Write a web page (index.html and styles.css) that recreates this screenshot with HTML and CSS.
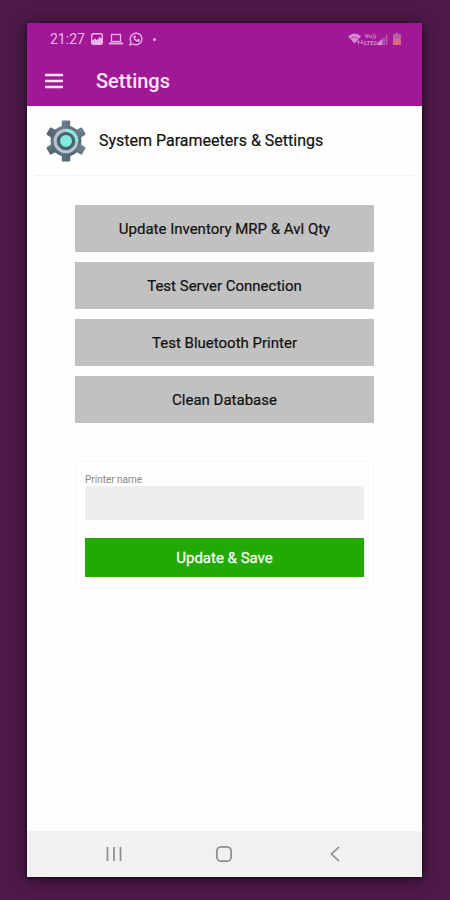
FILE: index.html
```html
<!DOCTYPE html>
<html lang="en">
<head>
    <meta charset="UTF-8">
    <meta name="viewport" content="width=device-width, initial-scale=1.0">
    <title>Settings</title>
    <link rel="stylesheet" href="styles.css">
</head>
<body>
    <div class="phone">
        <header class="top">
            <div class="status-bar">
                <span class="time">21:27</span>
                <svg width="12" height="12" viewBox="0 0 12 12">
                    <rect x="0.7" y="0.7" width="10.6" height="10.6" rx="1.5" fill="none" stroke="currentColor" stroke-width="1.4"/>
                    <path d="M1 8 L4 5.5 L6 7 L9 4 L11 6 V11 H1 Z" fill="currentColor"/>
                </svg>
                <svg width="14" height="12" viewBox="0 0 14 12">
                    <rect x="2.5" y="1.5" width="9" height="7" fill="none" stroke="currentColor" stroke-width="1.3"/>
                    <path d="M0 10.5 H14" stroke="currentColor" stroke-width="1.8"/>
                </svg>
                <svg width="14" height="14" viewBox="0 0 14 14" fill="none" stroke="currentColor">
                    <path d="M1 13 L2 9.7 A5.8 5.8 0 1 1 4.3 12 Z" stroke-width="1.3"/>
                    <path d="M5 4.3 C4.6 7 7 9.4 9.7 9.3 L9.9 8 L8.4 7.4 M5 4.3 L6 4.2 L6.5 5.6" stroke-width="1.4"/>
                </svg>
                <span class="dot"></span>
                <div class="signals">
                    <svg width="16" height="12" viewBox="0 0 16 12">
                        <path d="M0 3.5 Q6.5 -2.5 13 3.5 L6.5 10.5 Z" fill="currentColor"/>
                        <path d="M2.5 5.6 Q6.5 2.4 10.5 5.6" fill="none" stroke="#a01896" stroke-width="0.7"/>
                        <path d="M10.5 11 V8 M9.3 9.3 L10.5 7.8 L11.7 9.3 M14 7 V10.5 M12.8 9.2 L14 10.7 L15.2 9.2" fill="none" stroke="currentColor"/>
                    </svg>
                    <span class="lte">Vo))<br>LTE2</span>
                    <svg width="11" height="11" viewBox="0 0 11 11">
                        <path d="M0 11 V9.5 L5.5 4.5 V11 Z" fill="currentColor"/>
                        <path d="M7 11 V3.5 M9.5 11 V1" stroke="currentColor" stroke-width="1.5" opacity="0.6"/>
                    </svg>
                    <svg class="battery" width="8" height="12" viewBox="0 0 8 12">
                        <path d="M2.5 0 H5.5 V1.2 H8 V6 H0 V1.2 H2.5 Z" fill="#b560a8"/>
                        <rect y="5.5" width="8" height="6.5" rx="0.8" fill="#d96a83"/>
                    </svg>
                </div>
            </div>
            <div class="toolbar">
                <button class="menu-btn" type="button" aria-label="Menu">
                    <svg width="20" height="16" viewBox="0 0 20 16">
                        <path d="M1 2 H19 M1 8 H19 M1 14 H19" stroke="currentColor" stroke-width="2.4"/>
                    </svg>
                </button>
                <h1>Settings</h1>
            </div>
        </header>

        <main>
            <div class="section-title">
                <svg width="42" height="42" viewBox="0 0 42 42">
                    <defs>
                        <linearGradient id="steel" x1="0" y1="0" x2="1" y2="1">
                            <stop offset="0" stop-color="#71848e"/>
                            <stop offset="1" stop-color="#4f606b"/>
                        </linearGradient>
                    </defs>
                    <g fill="url(#steel)">
                        <circle cx="21" cy="21" r="15.5"/>
                        <path id="teeth" d="M15 8 L16.8 5.5 V1.5 Q16.8 0.5 17.8 0.5 H24.2 Q25.2 0.5 25.2 1.5 V5.5 L27 8 Z M15 34 L16.8 36.5 V40.5 Q16.8 41.5 17.8 41.5 H24.2 Q25.2 41.5 25.2 40.5 V36.5 L27 34 Z"/>
                        <use href="#teeth" transform="rotate(60 21 21)"/>
                        <use href="#teeth" transform="rotate(120 21 21)"/>
                    </g>
                    <circle cx="21" cy="21" r="10.8" fill="#536773" stroke="#b3c6d1" stroke-width="3"/>
                    <path d="M21 10.2 A10.8 10.8 0 0 1 31.8 21" fill="none" stroke="#8fe6e0" stroke-width="3"/>
                    <circle cx="21" cy="21" r="7" fill="#82ebe0" stroke="#43656d" stroke-width="2"/>
                </svg>
                <h2>System Parameeters &amp; Settings</h2>
            </div>

            <div class="actions">
                <button type="button">Update Inventory MRP &amp; Avl Qty</button>
                <button type="button">Test Server Connection</button>
                <button type="button">Test Bluetooth Printer</button>
                <button type="button">Clean Database</button>
            </div>

            <form class="printer-form">
                <label for="printerName">Printer name</label>
                <input type="text" id="printerName">
                <button type="button">Update &amp; Save</button>
            </form>
        </main>

        <nav class="nav-bar">
            <button type="button" aria-label="Recent apps">
                <svg width="16" height="16" viewBox="0 0 16 16">
                    <path d="M1.5 1 V15 M8 1 V15 M14.5 1 V15" stroke="currentColor" stroke-width="1.7"/>
                </svg>
            </button>
            <button type="button" aria-label="Home">
                <svg width="18" height="18" viewBox="0 0 18 18">
                    <rect x="1.8" y="1.8" width="14.4" height="14.4" rx="4.5" fill="none" stroke="currentColor" stroke-width="1.7"/>
                </svg>
            </button>
            <button type="button" aria-label="Back">
                <svg width="16" height="16" viewBox="0 0 16 16">
                    <path d="M12 1 L4.5 8 L12 15" fill="none" stroke="currentColor" stroke-width="1.7"/>
                </svg>
            </button>
        </nav>
    </div>
</body>
</html>
```

FILE: styles.css
```css
* { box-sizing: border-box; }
body {
    margin: 0;
    min-height: 100vh;
    display: flex;
    padding: 23px 28px 23px 27px;
    background: #4f1a4a;
    font-family: Roboto, sans-serif;
    color: #111;
}
button { font-family: inherit; border: none; padding: 0; cursor: pointer; }
svg { display: block; }
h1, h2 { margin: 0; font-weight: 500; }

.phone {
    flex: 1;
    min-width: 0;
    display: flex;
    flex-direction: column;
    background: #fefefe;
    box-shadow: 0 1px 3px #1c061c, 0 2px 16px rgba(20, 5, 20, 0.75);
}

/* header */
.top { background: #a01896; color: #fbe6f8; }
.status-bar {
    display: flex;
    align-items: center;
    gap: 6px;
    height: 32px;
    padding: 0 21px 0 23px;
    color: #eeb4e9;
}
.time { font-size: 14px; }
.dot { width: 3px; height: 3px; margin-left: 4px; border-radius: 50%; background: currentColor; }
.signals { display: flex; align-items: center; margin-left: auto; color: #d58bd0; }
.lte { font-size: 6px; line-height: 7px; font-weight: 700; text-align: center; }
.battery { margin-left: 5px; }
.toolbar { display: flex; align-items: center; gap: 32px; height: 51px; padding: 0 17px; }
.menu-btn { background: none; color: inherit; }
.toolbar h1 { font-size: 20px; }

/* content */
main { flex: 1; }
.section-title {
    display: flex;
    align-items: center;
    gap: 12px;
    height: 70px;
    margin: 0 8px;
    padding: 0 10px;
    border-bottom: 1px solid #f2f2f2;
}
.section-title h2 { font-size: 16px; font-weight: 400; -webkit-text-stroke: 0.2px; }
.actions { display: flex; flex-direction: column; gap: 10px; margin: 29px 48px 0; }
.actions button { height: 47px; background: #c1c1c1; color: #111; font-size: 15px; -webkit-text-stroke: 0.2px; }

.printer-form {
    display: flex;
    flex-direction: column;
    margin: 38px 48px 0;
    padding: 11px 9px 10px;
    border: 1px solid #f7f7f7;
}
.printer-form label { font-size: 10px; line-height: 13px; color: #888; }
.printer-form input { height: 34px; padding: 0 8px; border: none; background: #eee; font-size: 15px; }
.printer-form button { height: 39px; margin-top: 18px; background: #22a906; color: #f4fbf0; font-size: 15px; -webkit-text-stroke: 0.3px; }

/* system navigation */
.nav-bar {
    display: flex;
    justify-content: space-around;
    align-items: center;
    height: 46px;
    padding: 0 32px;
    background: #f1f1f1;
}
.nav-bar button { background: none; color: #8c8c8c; }
```
